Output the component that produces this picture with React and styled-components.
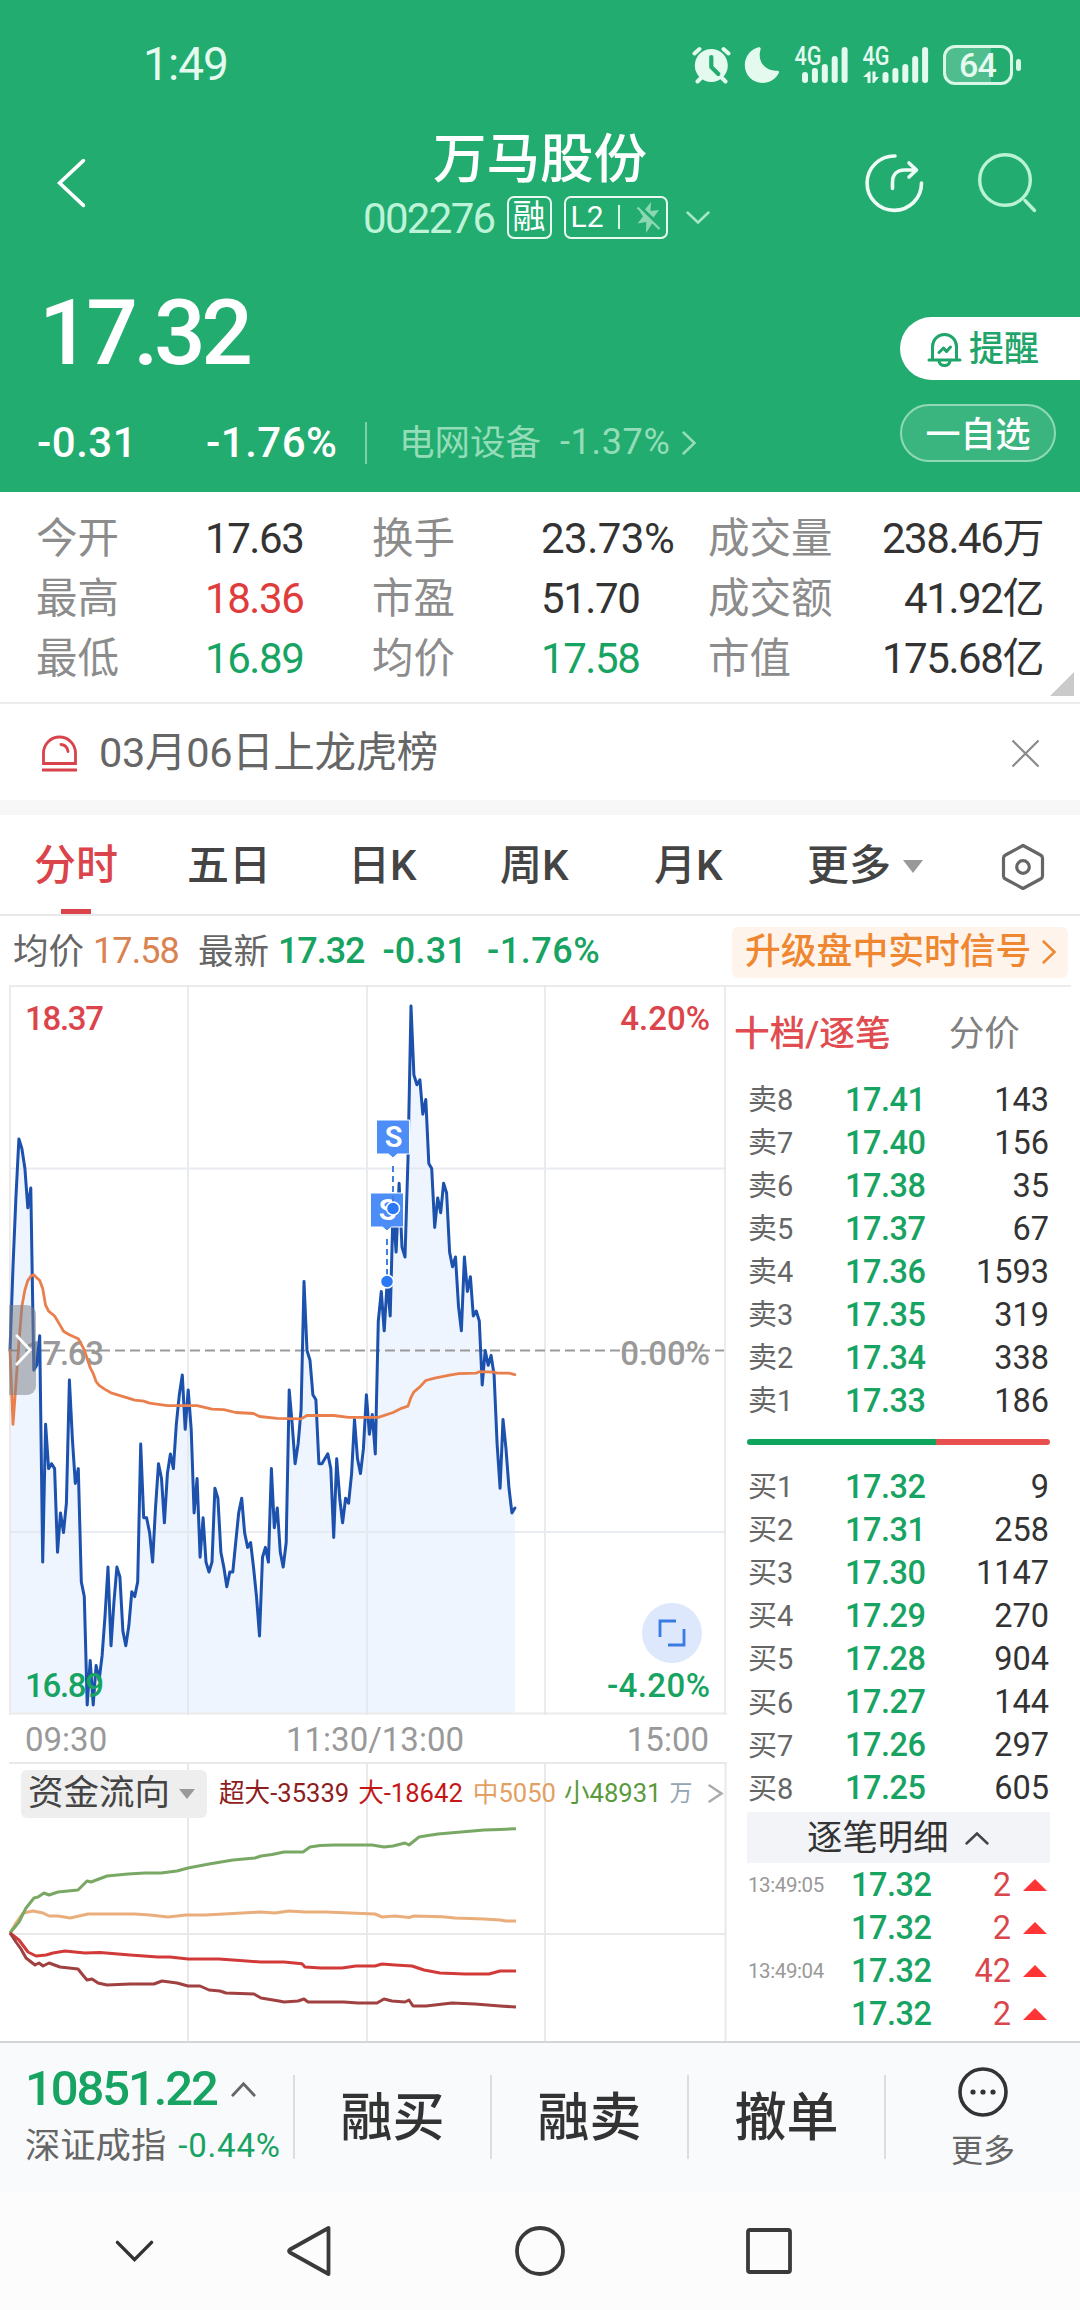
import React from 'react'
import styled, { createGlobalStyle, css } from 'styled-components'

const GREEN = '#17a362'
const RED = '#dc444b'

const GlobalStyle = createGlobalStyle`
  * {
    box-sizing: border-box;
  }

  body {
    margin: 0;
    background: #fff;
    font-family: Roboto, "Noto Sans CJK SC", sans-serif;
    line-height: 1.2;
    color: #333;
  }

  svg {
    display: block;
    flex: none;
  }
`

const Page = styled.div`
  width: 1080px;
  height: 2310px;
  overflow: hidden;
  display: flex;
  flex-direction: column;
`

const Text = styled.span`
  flex: none;
  white-space: nowrap;
  line-height: 1.2;
  font-size: ${p => p.$size || 42}px;
  color: ${p => p.$color || 'inherit'};
  font-weight: ${p => p.$weight || 400};
  letter-spacing: ${p => p.$ls || 0}em;
  margin-left: ${p => p.$ml || 0}px;
`

/* ---------- header ---------- */

const Header = styled.header`
  height: 492px;
  background: #22ac70;
  color: #fff;
`

const StatusBar = styled.div`
  height: 128px;
  padding: 2px 59px 0 143px;
  display: flex;
  align-items: center;
  color: #e4faef;
`

const StatusIcons = styled.div`
  margin-left: auto;
  display: flex;
  align-items: center;
  gap: 13.4px;
`

const Battery = styled.div`
  width: 70px;
  height: 40px;
  border: 3px solid #d8f7e7;
  border-radius: 12px;
  display: flex;
  align-items: center;
  justify-content: center;
  font-size: 34px;
  line-height: 34px;
  font-weight: 500;
  letter-spacing: -0.02em;
  background: linear-gradient(90deg, #4fbd8d 70%, transparent 70%);
`

const BatteryTip = styled.div`
  width: 5px;
  height: 12px;
  margin-left: -10px;
  border-radius: 3px;
  background: #d8f7e7;
`

const TitleBar = styled.div`
  height: 128px;
  display: grid;
  grid-template-columns: 360px 1fr 360px;
`

const TitleLeft = styled.div`
  padding: 29px 0 0 56px;
`

const TitleRight = styled.div`
  padding: 25px 42px 0 0;
  display: flex;
  justify-content: flex-end;
  align-items: flex-start;
  gap: 54px;
`

const TitleCenter = styled.div`
  display: flex;
  flex-direction: column;
  align-items: center;
`

const StockName = styled.h1`
  margin: 0;
  height: 65px;
  line-height: 64px;
  font-size: 53.5px;
  font-weight: 500;
`

const CodeRow = styled.div`
  width: 356px;
  height: 48px;
  display: flex;
  align-items: center;
`

const Code = styled.div`
  padding-top: 4px;
  margin-left: 1px;
  font-size: 42px;
  letter-spacing: -0.04em;
  color: #bdf3d8;
`

const Tag = styled.div`
  height: 43px;
  width: ${p => p.$width}px;
  margin-left: 12px;
  border: 2.5px solid #eafaf2;
  border-radius: 7px;
  display: flex;
  align-items: center;
  justify-content: center;
  font-size: ${p => p.$size}px;
  line-height: 38px;
`

const TagDivider = styled.div`
  width: 2px;
  height: 24px;
  margin: 0 16px 0 14px;
  background: #d8f7e7;
`

const QuoteArea = styled.div`
  height: 236px;
  display: flex;
  justify-content: space-between;
`

const Price = styled.div`
  height: 154px;
  padding: 17px 0 0 39px;
  font-size: 91px;
  line-height: 120px;
  font-weight: 500;
  letter-spacing: -0.05em;
`

const ChangeRow = styled.div`
  height: 64px;
  padding: 2px 0 0 37px;
  display: flex;
  align-items: center;
`

const ChangeCell = styled.div`
  width: 169px;
  font-size: 42px;
  font-weight: 500;
  letter-spacing: 0.012em;
`

const ChangeDivider = styled.div`
  width: 2px;
  height: 42px;
  margin: 0 32px 0 -10px;
  background: #7fd0aa;
`

const QuoteButtons = styled.div`
  width: 180px;
  padding-top: 61px;
`

const AlertButton = styled.button`
  width: 180px;
  height: 63px;
  padding: 2px 0 0 27px;
  display: flex;
  align-items: center;
  border: 0;
  border-radius: 32px 0 0 32px;
  background: #fff;
  color: #1fa469;
  font: 500 35px/60px Roboto, "Noto Sans CJK SC", sans-serif;
  gap: 7px;
`

const WatchButton = styled.button`
  width: 156px;
  height: 58px;
  margin-top: 24px;
  padding: 4px 0 0;
  border: 2px solid #90d9b6;
  border-radius: 29px;
  background: #3ab57f;
  color: #fff;
  font: 500 35px/52px Roboto, "Noto Sans CJK SC", sans-serif;
`

/* ---------- stats ---------- */

const Stats = styled.section`
  position: relative;
  height: 212px;
  padding: 17px 37px 0 36px;
  display: grid;
  grid-template-columns: 169px 167px 169px 167px 124px 1fr;
  grid-auto-rows: 60px;
  align-items: center;
  border-bottom: 2px solid #ececec;
`

const StatLabel = styled.div`
  font-size: 41.5px;
  line-height: 60px;
  color: #8c8c8c;
  white-space: nowrap;
`

const StatValue = styled.div`
  font-size: 42px;
  line-height: 60px;
  letter-spacing: ${p => (p.$wide ? -0.012 : -0.034)}em;
  white-space: nowrap;
  text-align: ${p => (p.$right ? 'right' : 'left')};
  color: ${p => p.$color || '#333'};
`

const Corner = styled.div`
  position: absolute;
  right: 6px;
  bottom: 6px;
  border-left: 24px solid transparent;
  border-bottom: 24px solid #cacaca;
`

const Notice = styled.section`
  height: 111px;
  padding: 2px 40px 0 41px;
  display: flex;
  align-items: center;
  border-bottom: 15px solid #f7f7f7;
  color: #666;

  svg:last-child {
    margin-left: auto;
  }
`

/* ---------- tabs ---------- */

const Tabs = styled.nav`
  height: 101px;
  padding-left: 34px;
  display: flex;
  align-items: stretch;
  border-bottom: 2px solid #e8e8e8;
`

const Tab = styled.div`
  width: ${p => p.$width}px;
  display: flex;
  align-items: center;
  font-size: 42px;
  font-weight: 500;
  color: ${p => (p.$active ? RED : '#444')};
  padding-top: 4px;

  ${p => p.$active && css`
    padding-left: 27px;
    text-indent: -27px;
    background: linear-gradient(${RED}, ${RED}) 27px 100% / 30px 5px no-repeat;
  `}
`

const Caret = styled.div`
  width: 0;
  border: ${p => p.$size}px solid transparent;
  border-top: ${p => p.$size * 1.3}px solid #999;
  border-bottom: 0;
  margin-left: ${p => p.$ml}px;
`

const Summary = styled.div`
  height: 69px;
  padding: 3px 12px 0 13px;
  display: flex;
  align-items: center;
  color: #666;
`

const Upgrade = styled.div`
  width: 336px;
  height: 51px;
  margin-left: auto;
  padding-left: 13px;
  display: flex;
  align-items: center;
  gap: 10px;
  border-radius: 6px;
  background: #fff4ec;
  color: #ef8731;
  font-size: 35.8px;
  font-weight: 500;
  white-space: nowrap;
`

/* ---------- chart and order book ---------- */

const Main = styled.main`
  height: 1056px;
  display: flex;
`

const Charts = styled.div`
  width: 727px;
  display: flex;
  flex-direction: column;
`

const ChartBox = styled.div`
  position: relative;
  height: 730px;
`

const Drawer = styled.div`
  position: absolute;
  left: 9px;
  top: 320px;
  width: 27px;
  height: 90px;
  padding-left: 5px;
  display: flex;
  align-items: center;
  border-radius: 0 9px 9px 0;
  background: rgba(125, 128, 135, 0.52);
`

const ExpandButton = styled.div`
  position: absolute;
  left: 642px;
  top: 618px;
  width: 60px;
  height: 60px;
  border-radius: 50%;
  display: flex;
  align-items: center;
  justify-content: center;
  background: #dde8fd;
`

const TimeAxis = styled.div`
  height: 47px;
  padding-top: 2px;
  margin: 0 18px 0 25px;
  display: grid;
  grid-template-columns: 261px 1fr auto;
  align-items: center;
  font-size: 33px;
  color: #999;
`

const FlowBox = styled.div`
  position: relative;
  height: 279px;
`

const FlowHead = styled.div`
  position: absolute;
  left: 21px;
  top: 7px;
  height: 49px;
  display: flex;
  align-items: center;
`

const FlowSelect = styled.div`
  width: 186px;
  height: 48px;
  margin-right: 12px;
  padding-left: 7px;
  display: flex;
  align-items: center;
  border-radius: 6px;
  background: #eee;
  color: #444;
  font-size: 35.5px;
  white-space: nowrap;
`

const Book = styled.aside`
  flex: 1;
  margin-right: 9px;
  border-top: 2px solid #ececec;
`

const BookTabs = styled.div`
  height: 92px;
  padding: 2px 0 0 7px;
  display: flex;
  align-items: center;
  font-size: 35.5px;
`

const BookRow = styled.div`
  height: 43.04px;
  padding-left: 21px;
  display: grid;
  grid-template-columns: 97px 1fr auto;
  align-items: center;
  margin-right: 22px;
`

const RatioBar = styled.div`
  height: 6px;
  margin: 16px 21px 21px 20px;
  border-radius: 3px;
  background: linear-gradient(90deg, #0fa45c 62.5%, #e84f4f 62.5%);
`

const DetailHead = styled.div`
  height: 51px;
  margin: 1px 21px 1px 20px;
  padding: 2px 0 0 60px;
  display: flex;
  align-items: center;
  gap: 15px;
  background: #f3f4f8;
  font-size: 35.4px;
`

const Trade = styled.div`
  height: 43px;
  padding: 0 24px 0 21px;
  display: grid;
  grid-template-columns: 103px 1fr auto 36px;
  align-items: center;

  svg {
    justify-self: end;
  }
`

/* ---------- footer ---------- */

const Footer = styled.footer`
  height: 151px;
  display: flex;
  border-top: 2px solid #d4d5d9;
  background: #f9fafc;
`

const IndexBox = styled.div`
  width: 293px;
  padding: 15px 0 0 25px;
`

const IndexRow = styled.div`
  height: ${p => p.$height}px;
  display: flex;
  align-items: center;
`

const TradeButton = styled.div`
  width: 197px;
  height: 84px;
  margin-top: 32px;
  padding-top: 5px;
  border-left: 2px solid #dcdde0;
  display: flex;
  align-items: center;
  justify-content: center;
  font-size: 52px;
  font-weight: 500;
`

const MoreButton = styled.div`
  flex: 1;
  height: 84px;
  margin-top: 32px;
  padding-top: 3px;
  border-left: 2px solid #dcdde0;
  display: flex;
  flex-direction: column;
  align-items: center;
  justify-content: center;
  gap: 15px;
  font-size: 32px;
  line-height: 38px;
  color: #666;
`

const SystemNav = styled.div`
  flex: 1;
  padding: 0 0 0 114px;
  display: flex;
  align-items: center;
  background: #fcfcfc;
`

const NavSlot = styled.div`
  width: ${p => p.$width}px;
`

/* ---------- data ---------- */

const stats = [
  ['今开', '17.63', null, '换手', '23.73%', null, '成交量', '238.46万'],
  ['最高', '18.36', '#e03c3c', '市盈', '51.70', null, '成交额', '41.92亿'],
  ['最低', '16.89', GREEN, '均价', '17.58', GREEN, '市值', '175.68亿'],
]

const sells = [
  ['卖8', '17.41', '143'],
  ['卖7', '17.40', '156'],
  ['卖6', '17.38', '35'],
  ['卖5', '17.37', '67'],
  ['卖4', '17.36', '1593'],
  ['卖3', '17.35', '319'],
  ['卖2', '17.34', '338'],
  ['卖1', '17.33', '186'],
]

const buys = [
  ['买1', '17.32', '9'],
  ['买2', '17.31', '258'],
  ['买3', '17.30', '1147'],
  ['买4', '17.29', '270'],
  ['买5', '17.28', '904'],
  ['买6', '17.27', '144'],
  ['买7', '17.26', '297'],
  ['买8', '17.25', '605'],
]

const trades = [
  ['13:49:05', '17.32', '2'],
  ['', '17.32', '2'],
  ['13:49:04', '17.32', '42'],
  ['', '17.32', '2'],
]

// one price per minute, in cents
const prices = [
  1763, 1780, 1794, 1806, 1804, 1800, 1792, 1796, 1759, 1760, 1766, 1720, 1748, 1739, 1740,
  1739, 1722, 1730, 1726, 1732, 1757, 1745, 1736, 1739, 1716, 1713, 1691, 1700, 1691, 1699,
  1696, 1701, 1709, 1719, 1703, 1712, 1719, 1717, 1706, 1703, 1707, 1714, 1713, 1716, 1744,
  1729, 1729, 1726, 1720, 1731, 1740, 1737, 1728, 1738, 1742, 1739, 1748, 1754, 1758, 1747,
  1755, 1747, 1730, 1737, 1721, 1729, 1720, 1718, 1720, 1735, 1733, 1722, 1719, 1715, 1718,
  1718, 1724, 1730, 1733, 1726, 1723, 1724, 1719, 1713, 1705, 1721, 1723, 1720, 1739, 1727,
  1731, 1722, 1719, 1724, 1755, 1748, 1740, 1744, 1751, 1777, 1763, 1761, 1754, 1753, 1740,
  1740, 1741, 1742, 1739, 1725, 1741, 1733, 1728, 1733, 1732, 1738, 1749, 1741, 1738, 1743,
  1754, 1746, 1750, 1742, 1769, 1775, 1767, 1777, 1770, 1792, 1783, 1797, 1784, 1782, 1802,
  1833, 1819, 1817, 1818, 1811, 1814, 1801, 1800, 1788, 1794, 1791, 1797, 1795, 1783, 1780,
  1782, 1772, 1767, 1782, 1775, 1778, 1770, 1771, 1769, 1756, 1763, 1760, 1762, 1758, 1744,
  1735, 1749, 1743, 1735, 1730, 1731,
]

// [minute, cents]
const average = [
  [0, 1763], [1, 1748], [3, 1764.5], [4, 1772], [5, 1775.3], [6, 1777.2], [7, 1778.1], [8, 1778.4],
  [9, 1777.8], [10, 1777.2], [11, 1775.6], [12, 1772.2], [13, 1771], [15, 1770], [17, 1768],
  [18, 1766.9], [20, 1766.2], [23, 1765.4], [25, 1763.1], [27, 1759.5], [28, 1758.3], [29, 1756.7],
  [30, 1755.9], [32, 1755.1], [34, 1754.4], [39, 1753.5], [42, 1752.9], [45, 1752.7], [47, 1752.3],
  [53, 1751.8], [63, 1751.8], [68, 1751.1], [72, 1751], [76, 1750.4], [82, 1750.2], [84, 1749.6],
  [90, 1749.2], [98, 1749.1], [100, 1749.8], [109, 1749.8], [114, 1749.4], [124, 1749.4],
  [129, 1750.4], [132, 1751.3], [134, 1751.7], [135, 1753.5], [136, 1754.6], [138, 1755.6],
  [140, 1756.9], [143, 1757.4], [148, 1758], [151, 1758.3], [157, 1758.4], [158, 1758.7],
  [163, 1758.6], [164, 1758.4], [168, 1758.4], [170, 1758.1],
]

const flows = [
  {
    color: '#e9ae7c',
    points: '10,171 16,161 23,151 33,149 43,151 49,154 58,154 70,156 79,154 88,152 110,152 135,152 150,153 168,155 186,153 205,153 224,152 242,151 261,150 275,151 289,149 305,150 326,150 350,151 375,152 382,155 395,154 409,155.5 414,154 442,154.7 455,156 484,157 500,158 506,159 516,159',
  },
  {
    color: '#79a865',
    points: '10,171 19,160 26,146 34,136 38,135 44,131 49,133 58,130 78,128 82,124 87,119 91,120 107,114 128,112 145,111 161,111 177,109 188,106 209,102 233,98 255,96 261,94 272,92.5 284,90 303,90 310,85 320,83.5 335,83 372,83 384,85 393,84 405,81 409,83 419,75 428,73.5 438,72 484,68 500,67.5 516,66.7',
  },
  {
    color: '#d23a3a',
    points: '10,171 19,178 28,190 36,194 46,193 53,191 65,189 85,191 100,190.5 130,193 158,195 170,195 188,197 219,197 240,198.5 261,200 284,200 302,201.7 305,205 321,206 342,206 356,204 375,204 382,202 395,203 412,204 424,208 440,211 465,212 489,212 500,209 516,209',
  },
  {
    color: '#a04040',
    points: '10,171 16,180 21,187 26,196 35,203 39,201 43,204 49,201 60,205 78,207 82,212 87,218 92,217 98,221 107,223 130,222 154,222 162,219 177,221 188,224 200,224 209,228 220,229 226,231 254,232 261,236 279,239 284,240 298,239 304,237 308,240 344,240 358,241 377,241 384,237 392,239 405,240 409,238 413,244 426,244 452,241 475,242 500,244 516,245',
  },
]

const minuteX = m => 10 + m * 2.97
const centsY = c => 365.5 + (1763 - c) * 4.922

const toPoints = list => list.map(([m, c]) => `${minuteX(m).toFixed(1)},${centsY(c).toFixed(1)}`).join(' ')

const pricePoints = toPoints(prices.map((c, i) => [i, c]))
const averagePoints = toPoints(average)

/* ---------- icons ---------- */

const Chevron = ({ w, h, dir, stroke = 2.5, color = 'currentColor' }) => {
  const p = stroke
  const d = {
    left: `M${w - p} ${p}L${p} ${h / 2}L${w - p} ${h - p}`,
    right: `M${p} ${p}L${w - p} ${h / 2}L${p} ${h - p}`,
    down: `M${p} ${p}L${w / 2} ${h - p}L${w - p} ${p}`,
    up: `M${p} ${h - p}L${w / 2} ${p}L${w - p} ${h - p}`,
  }[dir]
  return (
    <svg width={w} height={h} fill="none" stroke={color} strokeWidth={stroke} strokeLinecap="round">
      <path d={d} />
    </svg>
  )
}

const AlarmIcon = () => (
  <svg width="39" height="38" viewBox="0 0 39 38" fill="none" stroke="currentColor" strokeLinecap="round">
    <circle cx="19.3" cy="19.5" r="16.5" fill="currentColor" stroke="none" />
    <path d="M2.5 7.5l5-4.5M36.5 7.5l-5-4.5M9 32l-3.5 3.5M30 32l3.5 3.5" strokeWidth="4" />
    <path d="M19.3 11v10l7 7" stroke="#22ac70" strokeWidth="4.2" strokeLinejoin="round" />
  </svg>
)

const MoonIcon = () => (
  <svg width="36" height="38" viewBox="0 0 36 38" fill="currentColor">
    <path d="M14.5 1.3c1.5-.5 2.6.6 2 2.2-3.5 11.5 4.5 22 16.5 21.2 1.8-.1 2.5 1 1.8 2.4C31.5 33.5 25.5 37 18.5 37 8.6 37 .8 29.2.8 19.3.8 10.8 6.5 3.3 14.5 1.3z" />
  </svg>
)

const SignalIcon = ({ data }) => {
  const start = data ? 19.5 : 7
  const width = data ? 67 : 55
  return (
    <svg width={width} height="50" viewBox={`-1 -6 ${width} 50`} fill="currentColor">
      <text x="-.5" y="19" fontSize="25" fontWeight="500" textLength="27" lengthAdjust="spacingAndGlyphs">4G</text>
      {[26, 22, 18, 10, 1].map((y, i) => (
        <rect key={y} x={start + i * 9.9} y={y} width="6" height={37 - y} rx="3" />
      ))}
      {data && <path d="M0 31l6-5.5h1.5V37h-3v-6zM9.5 25.5h3V31h3.5l-5 6h-1.5z" />}
    </svg>
  )
}

const ShareIcon = () => (
  <svg width="60" height="60" viewBox="0 0 60 60" fill="none" stroke="#eefcf5" strokeWidth="3.6" strokeLinecap="round">
    <path d="M31 3A27.2 27.2 0 1 0 57.5 30" />
    <path d="M28.5 35.5v-6c0-8 4.5-12.5 12-12.5h11.5M45 10l7.5 7-7.5 7" strokeLinejoin="round" />
  </svg>
)

const SearchIcon = () => (
  <svg width="60" height="60" viewBox="0 0 60 60" fill="none" stroke="#b9f2d5" strokeWidth="3.4" strokeLinecap="round">
    <circle cx="27" cy="27" r="25.3" />
    <path d="M47 47.5L56.5 57.5" />
  </svg>
)

const FlashOffIcon = () => (
  <svg width="25" height="31" viewBox="0 0 25 31" fill="#8ad8b1">
    <path d="M15 0l-.5 9 8.5-1-5.5 7.5L9 7.5zM5.5 9.5L16.5 21 10 31l.3-11-8.8 1.5L7 14.5 4 10z" />
    <path d="M1.5 5.5L23.5 27" stroke="#8ad8b1" strokeWidth="2.4" />
  </svg>
)

const BellIcon = () => (
  <svg width="35" height="36" viewBox="0 0 35 36" fill="none" stroke="currentColor" strokeWidth="3" strokeLinejoin="round" strokeLinecap="round">
    <path d="M5.5 27V14.5a12 12 0 0 1 24 0V27M2 28h31M12 29c1 6 10 6 11 0" />
    <path d="M12 20.5l4.5-4.5 3 3.5 4-4.5" />
  </svg>
)

const SirenIcon = () => (
  <svg width="37" height="37" viewBox="0 0 37 37" fill="none" stroke="#d8434b" strokeWidth="2.8">
    <path d="M2.5 28.5V18a16 16 0 0 1 32 0v10.500zM1 35h35" />
    <path d="M20 9.5c4 .5 6.5 3 7 7" strokeLinecap="round" />
  </svg>
)

const CloseIcon = () => (
  <svg width="29" height="29" viewBox="0 0 29 29" stroke="#8a8a8a" strokeWidth="2.2">
    <path d="M1.5 1.5l26 26M27.5 1.5l-26 26" />
  </svg>
)

const HexIcon = () => (
  <svg width="44" height="48" viewBox="0 0 44 48" fill="none" stroke="#666" strokeWidth="3.2" strokeLinejoin="round">
    <path d="M22 2.5l17.5 9.5q2 1 2 3v18q0 2-2 3L22 45.5 4.5 36q-2-1-2-3V15q0-2 2-3z" />
    <circle cx="22" cy="24" r="6.3" />
  </svg>
)

const MoreIcon = () => (
  <svg width="50" height="50" viewBox="0 0 50 50" fill="#333">
    <circle cx="25" cy="25" r="23" fill="none" stroke="#333" strokeWidth="3.6" />
    <circle cx="15" cy="25" r="2.6" />
    <circle cx="25" cy="25" r="2.6" />
    <circle cx="35" cy="25" r="2.6" />
  </svg>
)

/* ---------- charts ---------- */

const Flag = ({ x, y }) => (
  <g>
    <path d={`M${x - 16.5} ${y}h33v34h-12l-4.5 4-4.5-4h-12z`} fill="#4c8df8" stroke="#fff" strokeWidth="1" />
    <text x={x + 0.5} y={y + 27} fill="#fff" fontSize="29" fontWeight="600" textAnchor="middle">S</text>
    <path d={`M${x} ${y + 46}v38`} stroke="#3f7fe0" strokeWidth="2" strokeDasharray="6 4" />
    <circle cx={x} cy={y + 88.5} r="6.5" fill="#2a78f5" stroke="#fff" strokeWidth="1.5" />
  </g>
)

const PriceChart = () => (
  <svg width="727" height="730" viewBox="0 0 727 730" fill="none">
    <path d={`M10 729L${pricePoints.replace(/ /g, 'L')}V729z`} fill="#eff5fe" />
    <path d="M9 1h718M10 0v730M725 0v730M9 728.5h718" stroke="#ebebeb" strokeWidth="2" />
    <path d="M188 0v730M367 0v730M545 0v730M10 183.5h716M10 547h716" stroke="#e2e6ec" strokeOpacity=".8" strokeWidth="2" />
    <path d="M10 365.5h714" stroke="#999" strokeWidth="1.8" strokeDasharray="10 5" />
    <g fontSize="33" fill="#999" fontWeight="500">
      <text x="25" y="380" textLength="79">17.63</text>
      <text x="710" y="380" textAnchor="end">0.00%</text>
    </g>
    <polyline points={pricePoints} stroke="#1c51ad" strokeWidth="3" strokeLinejoin="round" strokeLinecap="round" />
    <polyline points={averagePoints} stroke="#e97f4c" strokeWidth="2.8" strokeLinejoin="round" strokeLinecap="round" />
    <Flag x={387} y={208} />
    <Flag x={393} y={135} />
    <g fontSize="33" fontWeight="500">
      <text x="25" y="45" fill={RED} textLength="79">18.37</text>
      <text x="710" y="45" fill={RED} textAnchor="end">4.20%</text>
      <text x="25" y="712" fill={GREEN} textLength="79">16.89</text>
      <text x="710" y="712" fill={GREEN} textAnchor="end" textLength="103">-4.20%</text>
    </g>
  </svg>
)

const FlowChart = () => (
  <svg width="727" height="279" viewBox="0 0 727 279" fill="none">
    <path d="M9 1h718M188 0v280M367 0v280M545 0v280M725.5 0v280M9 172h716" stroke="#e9e9e9" strokeWidth="2" />
    {flows.map(f => (
      <polyline key={f.color} points={f.points} stroke={f.color} strokeWidth="3" strokeLinejoin="round" />
    ))}
  </svg>
)

const BookSide = ({ rows }) => rows.map(([name, price, volume]) => (
  <BookRow key={name}>
    <Text $size={29} $color="#666">{name}</Text>
    <Text $size={32.5} $ls={-0.015} $color={GREEN} $weight={500}>{price}</Text>
    <Text $size={32.5}>{volume}</Text>
  </BookRow>
))

class App extends React.Component {

  renderHeader() {
    return (
      <Header>
        <StatusBar>
          <Text $size={46} $ls={-0.02}>1:49</Text>
          <StatusIcons>
            <AlarmIcon />
            <MoonIcon />
            <SignalIcon />
            <SignalIcon data />
            <Battery>64</Battery>
            <BatteryTip />
          </StatusIcons>
        </StatusBar>
        <TitleBar>
          <TitleLeft>
            <Chevron dir="left" w={31} h={52} stroke={3.6} />
          </TitleLeft>
          <TitleCenter>
            <StockName>万马股份</StockName>
            <CodeRow>
              <Code>002276</Code>
              <Tag $width={45} $size={33}>融</Tag>
              <Tag $width={104} $size={30}>
                L2
                <TagDivider />
                <FlashOffIcon />
              </Tag>
              <Text $ml={17}><Chevron dir="down" w={26} h={15} color="#a8e6c8" /></Text>
            </CodeRow>
          </TitleCenter>
          <TitleRight>
            <ShareIcon />
            <SearchIcon />
          </TitleRight>
        </TitleBar>
        <QuoteArea>
          <div>
            <Price>17.32</Price>
            <ChangeRow>
              <ChangeCell>-0.31</ChangeCell>
              <ChangeCell>-1.76%</ChangeCell>
              <ChangeDivider />
              <Text $size={35.5} $color="#94ddb8">电网设备</Text>
              <Text $size={36} $ls={0.018} $color="#94ddb8" $ml={19}>-1.37%</Text>
              <Text $ml={11}><Chevron dir="right" w={16} h={26} color="#94ddb8" /></Text>
            </ChangeRow>
          </div>
          <QuoteButtons>
            <AlertButton><BellIcon />提醒</AlertButton>
            <WatchButton>一自选</WatchButton>
          </QuoteButtons>
        </QuoteArea>
      </Header>
    )
  }

  renderStats() {
    return (
      <Stats>
        {stats.map(([l1, v1, c1, l2, v2, c2, l3, v3]) => (
          <React.Fragment key={l1}>
            <StatLabel>{l1}</StatLabel>
            <StatValue $color={c1}>{v1}</StatValue>
            <StatLabel>{l2}</StatLabel>
            <StatValue $color={c2} $wide={v2.endsWith('%')}>{v2}</StatValue>
            <StatLabel>{l3}</StatLabel>
            <StatValue $right>{v3}</StatValue>
          </React.Fragment>
        ))}
        <Corner />
      </Stats>
    )
  }

  renderTabs() {
    return (
      <Tabs>
        <Tab $active $width={153}>分时</Tab>
        <Tab $width={161}>五日</Tab>
        <Tab $width={152}>日K</Tab>
        <Tab $width={154}>周K</Tab>
        <Tab $width={153}>月K</Tab>
        <Tab $width={194}>更多<Caret $size={10.5} $ml={12} /></Tab>
        <Tab $width={44}><HexIcon /></Tab>
      </Tabs>
    )
  }

  renderCharts() {
    return (
      <Charts>
        <ChartBox>
          <PriceChart />
          <Drawer><Chevron dir="right" w={19} h={34} stroke={2.8} color="#fff" /></Drawer>
          <ExpandButton>
            <svg width="28" height="28" fill="none" stroke="#3b7ae2" strokeWidth="2.8">
              <path d="M2 18V2h16M26 10v16H10" />
            </svg>
          </ExpandButton>
        </ChartBox>
        <TimeAxis>
          <span>09:30</span>
          <span>11:30/13:00</span>
          <span>15:00</span>
        </TimeAxis>
        <FlowBox>
          <FlowChart />
          <FlowHead>
            <FlowSelect>资金流向<Caret $size={8} $ml={9} /></FlowSelect>
            <Text $size={25.6} $color="#8e1d1d">超大-35339</Text>
            <Text $size={25.6} $color="#c41717" $ml={9}>大-18642</Text>
            <Text $size={25.6} $color="#e3a063" $ml={10}>中5050</Text>
            <Text $size={25.6} $color="#5a9a3c" $ml={8}>小48931</Text>
            <Text $size={23} $color="#93a5b3" $ml={8}>万</Text>
            <Text $ml={15}><Chevron dir="right" w={17} h={21} color="#aaa" /></Text>
          </FlowHead>
        </FlowBox>
      </Charts>
    )
  }

  renderBook() {
    return (
      <Book>
        <BookTabs>
          <Text $size={35.7} $color="#e04c50" $weight={500}>十档/逐笔</Text>
          <Text $size={35.5} $color="#808080" $ml={58}>分价</Text>
        </BookTabs>
        <BookSide rows={sells} />
        <RatioBar />
        <BookSide rows={buys} />
        <DetailHead>
          逐笔明细
          <Chevron dir="up" w={26} h={15} color="#444" />
        </DetailHead>
        {trades.map(([time, price, volume], i) => (
          <Trade key={i}>
            <Text $size={20.5} $color="#999" $ls={-0.02}>{time}</Text>
            <Text $size={32.5} $ls={-0.015} $color={GREEN} $weight={500}>{price}</Text>
            <Text $size={32.5} $color="#d9464c">{volume}</Text>
            <svg width="24" height="12"><path d="M0 12L12 0L24 12z" fill="#ff3434" /></svg>
          </Trade>
        ))}
      </Book>
    )
  }

  render() {
    return (
      <Page>
        <GlobalStyle />
        {this.renderHeader()}
        {this.renderStats()}
        <Notice>
          <SirenIcon />
          <Text $size={41.5} $ls={-0.008} $ml={21}>03月06日上龙虎榜</Text>
          <CloseIcon />
        </Notice>
        {this.renderTabs()}
        <Summary>
          <Text $size={35.5}>均价</Text>
          <Text $size={36} $ls={-0.025} $color="#d98350" $ml={9}>17.58</Text>
          <Text $size={35.5} $ml={19}>最新</Text>
          <Text $size={36} $ls={-0.03} $color={GREEN} $ml={9} $weight={500}>17.32</Text>
          <Text $size={36} $ls={0.005} $color={GREEN} $ml={18} $weight={500}>-0.31</Text>
          <Text $size={36} $ls={0.015} $color={GREEN} $ml={20} $weight={500}>-1.76%</Text>
          <Upgrade>
            升级盘中实时信号
            <Chevron dir="right" w={16} h={26} />
          </Upgrade>
        </Summary>
        <Main>
          {this.renderCharts()}
          {this.renderBook()}
        </Main>
        <Footer>
          <IndexBox>
            <IndexRow $height={62}>
              <Text $size={49} $ls={-0.043} $weight={500} $color={GREEN}>10851.22</Text>
              <Text $ml={13}><Chevron dir="up" w={27} h={17} color="#666" stroke={2.8} /></Text>
            </IndexRow>
            <IndexRow $height={52}>
              <Text $size={35.3} $color="#666">深证成指</Text>
              <Text $size={33} $color={GREEN} $ml={12} $ls={0.025}>-0.44%</Text>
            </IndexRow>
          </IndexBox>
          <TradeButton>融买</TradeButton>
          <TradeButton>融卖</TradeButton>
          <TradeButton>撤单</TradeButton>
          <MoreButton>
            <MoreIcon />
            更多
          </MoreButton>
        </Footer>
        <SystemNav>
          <NavSlot $width={172}><Chevron dir="down" w={41} h={24} stroke={3.4} color="#333" /></NavSlot>
          <NavSlot $width={229}>
            <svg width="45" height="52" fill="none" stroke="#3a3a3a" strokeWidth="3.8" strokeLinejoin="round">
              <path d="M42.5 3v46L4 27.500q-2-1.500 0-3z" />
            </svg>
          </NavSlot>
          <NavSlot $width={231}>
            <svg width="50" height="50" fill="none" stroke="#3a3a3a" strokeWidth="3.8"><circle cx="25" cy="25" r="23" /></svg>
          </NavSlot>
          <svg width="46" height="46" fill="none" stroke="#3a3a3a" strokeWidth="3.8"><rect x="2" y="2" width="42" height="42" rx="2" /></svg>
        </SystemNav>
      </Page>
    )
  }
}

export default App
